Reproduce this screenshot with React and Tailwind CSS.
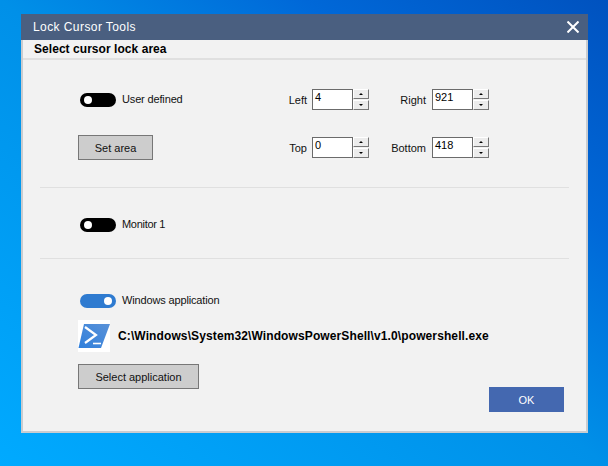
const font = "font-['Liberation_Sans',Arial,sans-serif]"

function Toggle({ on = false }) {
  return (
    <span className={`flex h-[14px] w-[36px] shrink-0 items-center rounded-full px-[4px] ${on ? 'justify-end bg-[#2f7bd0]' : 'bg-black'}`}>
      <span className="h-[8px] w-[8px] rounded-full bg-white" />
    </span>
  )
}

function ToggleRow({ on, label, tracking }) {
  return (
    <div className="flex h-[14px] items-center gap-[6px] pl-[2px]">
      <Toggle on={on} />
      <span className={`-mt-[2px] text-[11px] leading-[14px] text-[#111] ${tracking}`}>{label}</span>
    </div>
  )
}

function Spin({ dir }) {
  return (
    <button className="flex h-[10px] w-[16px] items-center justify-center border border-t-white border-l-white border-r-[#777] border-b-[#777] bg-[#ececec]">
      <span className={`h-0 w-0 border-x-[2px] border-x-transparent ${dir === 'up' ? 'border-b-[2px] border-b-black' : 'border-t-[2px] border-t-black'}`} />
    </button>
  )
}

function Spinner({ label, labelWidth, gap, value }) {
  return (
    <div className="flex items-center">
      <span className={`pt-px text-right text-[11px] text-[#111] ${labelWidth} ${gap}`}>{label}</span>
      <div className="flex h-[21px] w-[41px] items-start border border-[#6b6b6b] bg-white pl-[2px] text-[11px] leading-[15px] text-black">{value}</div>
      <div className="flex h-[21px] flex-col justify-between">
        <Spin dir="up" />
        <Spin dir="down" />
      </div>
    </div>
  )
}

function GrayButton({ width, children }) {
  return (
    <button className={`h-[25px] border border-[#777] bg-[#cdcdcd] pt-px text-[11px] text-[#111] ${width}`}>{children}</button>
  )
}

function PowerShellIcon() {
  return (
    <svg width="32" height="32" viewBox="0 0 32 32" className="shrink-0 bg-white">
      <defs>
        <linearGradient id="ps" x1="0" y1="1" x2="1" y2="0">
          <stop offset="0" stopColor="#2f7fdc" />
          <stop offset="1" stopColor="#5a92d8" />
        </linearGradient>
      </defs>
      <path d="M6 4H32L23 28H0.5Z" fill="url(#ps)" />
      <path d="M7 7L18 15L7 23" fill="none" stroke="#fff" strokeWidth="2.2" />
      <path d="M15 23.5H23" stroke="#fff" strokeWidth="1.6" />
    </svg>
  )
}

export default function App() {
  return (
    <div className={`${font} h-[466px] w-[608px] overflow-hidden bg-[linear-gradient(to_bottom_left,#0052bf_0%,#0068d8_25%,#0090e8_50%,#00aaff_100%)] pl-[21px] pt-[14px]`}>
      <div className="h-[419px] w-[567px] border-x-2 border-b-2 border-x-[#c9ccd0] border-b-[#c9ccd0] bg-[#f2f2f2]">
        {/* Title bar */}
        <div className="-mx-[2px] flex h-[26px] items-center justify-between bg-[#4a5f80] pl-[12px] pr-[8px]">
          <span className="text-[12px] font-medium tracking-[0.42px] text-white">Lock Cursor Tools</span>
          <svg width="12" height="12" viewBox="0 0 12 12" className="mr-[1px]">
            <path d="M0.5 0.5L11.5 11.5M11.5 0.5L0.5 11.5" stroke="#fff" strokeWidth="2" />
          </svg>
        </div>

        {/* Tab strip */}
        <div className="flex h-[20px] items-center border-b-2 border-[#e0e0e0] pl-[11px]">
          <span className="text-[12px] font-bold tracking-[0.05px] text-black">Select cursor lock area</span>
        </div>

        <div className="pl-[55px] pr-[17px]">
          <div className="mt-[29px] flex h-[21px] items-center">
            <div className="w-[210px]"><ToggleRow label="User defined" tracking="tracking-[-0.15px]" /></div>
            <Spinner label="Left" labelWidth="w-[19px]" gap="mr-[5px]" value="4" />
            <Spinner label="Right" labelWidth="w-[57px]" gap="mr-[6px]" value="921" />
          </div>

          <div className="mt-[25px] flex h-[25px] items-center">
            <div className="w-[210px]"><GrayButton width="w-[75px]">Set area</GrayButton></div>
            <Spinner label="Top" labelWidth="w-[19px]" gap="mr-[5px]" value="0" />
            <Spinner label="Bottom" labelWidth="w-[57px]" gap="mr-[6px]" value="418" />
          </div>

          <div className="-ml-[38px] mt-[27px] h-px bg-[#e0e0e0]" />

          <div className="mt-[30px]"><ToggleRow label="Monitor 1" tracking="tracking-[-0.3px]" /></div>

          <div className="-ml-[38px] mt-[26px] h-px bg-[#e0e0e0]" />

          <div className="mt-[35px]"><ToggleRow on label="Windows application" tracking="tracking-[-0.15px]" /></div>

          <div className="mt-[12px] flex items-center gap-[8px]">
            <PowerShellIcon />
            <span className="text-[12px] font-bold tracking-[0.11px] text-black">C:\Windows\System32\WindowsPowerShell\v1.0\powershell.exe</span>
          </div>

          <div className="mt-[12px] flex items-start">
            <GrayButton width="w-[121px]">Select application</GrayButton>
            <button className="ml-auto mr-[5px] mt-[23px] h-[25px] w-[75px] bg-[#4468b0] pt-px text-[11px] text-white">OK</button>
          </div>
        </div>
      </div>
    </div>
  )
}
